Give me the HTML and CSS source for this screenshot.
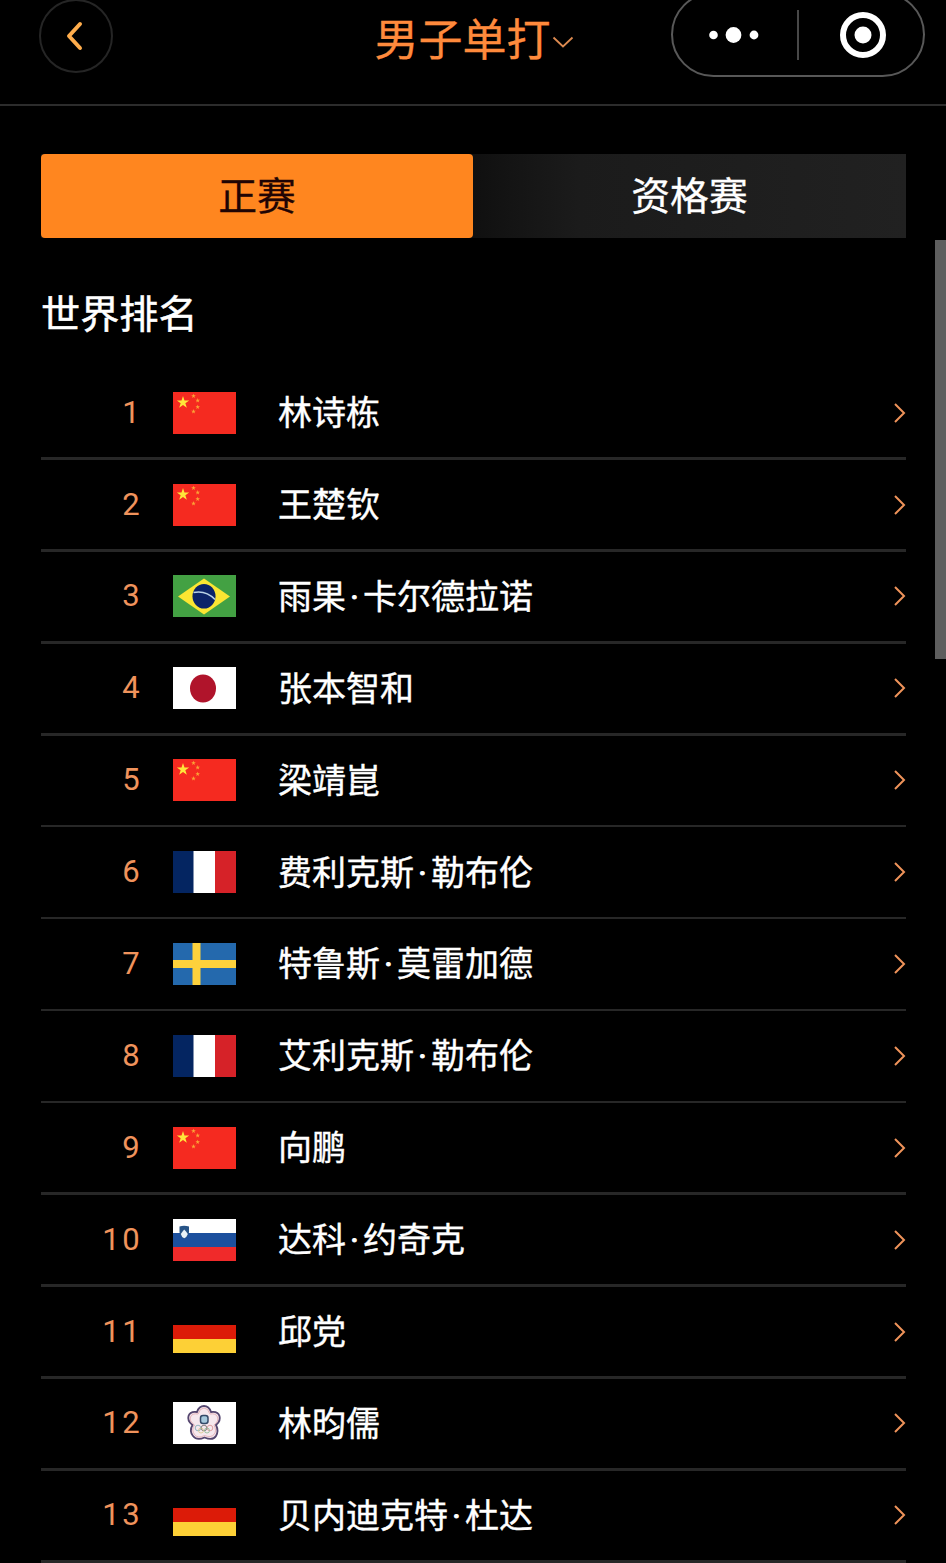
FILE: index.html
```html
<!DOCTYPE html>
<html lang="zh-CN">
<head>
<meta charset="utf-8">
<title>男子单打</title>
<link rel="stylesheet" href="styles.css">
</head>
<body>
<svg class="defs" width="0" height="0" aria-hidden="true">
  <defs>
    <symbol id="star" viewBox="-10 -10 20 20"><path d="M0-10 2.3-3.1H9.5L3.6 1.2 5.9 8.1 0 3.8-5.9 8.1-3.6 1.2-9.5-3.1H-2.3Z"/></symbol>
    <symbol id="cn" viewBox="0 0 63 42">
      <rect width="63" height="42" fill="#f52a20"/>
      <use href="#star" x="3.5" y="4" width="13" height="13" fill="#ffe63a"/>
      <g fill="#fba436">
        <use href="#star" x="18" y="1.500" width="5" height="5"/>
        <use href="#star" x="22.200" y="6" width="5" height="5"/>
        <use href="#star" x="22.200" y="12.500" width="5" height="5"/>
        <use href="#star" x="18" y="17" width="5" height="5"/>
      </g>
    </symbol>
    <symbol id="br" viewBox="0 0 63 42">
      <rect width="63" height="42" fill="#43a143"/>
      <path d="M5 21.5 31 3.5 57 21.5 31 39.500Z" fill="#fbe632"/>
      <ellipse cx="31" cy="21.300" rx="11.500" ry="12.300" fill="#0b2468"/>
      <path d="M20.500 17.500Q33 15 42 24.500" fill="none" stroke="#b9d3e6" stroke-width="1.700"/>
    </symbol>
    <symbol id="jp" viewBox="0 0 63 42">
      <rect width="63" height="42" fill="#fff"/>
      <ellipse cx="30" cy="21.500" rx="13" ry="14" fill="#b0142b"/>
    </symbol>
    <symbol id="fr" viewBox="0 0 63 42">
      <rect width="63" height="42" fill="#fff"/>
      <rect width="20.500" height="42" fill="#042561"/>
      <rect x="42" width="21" height="42" fill="#d62228"/>
    </symbol>
    <symbol id="se" viewBox="0 0 63 42">
      <rect width="63" height="42" fill="#2469ad"/>
      <path d="M19.500 0h8v17H63v8H27.500v17h-8V25H0v-8h19.500Z" fill="#fdd13c"/>
    </symbol>
    <symbol id="si" viewBox="0 0 63 42">
      <rect width="63" height="42" fill="#fff"/>
      <rect y="14" width="63" height="14" fill="#1c509e"/>
      <rect y="28" width="63" height="14" fill="#f02a2a"/>
      <path d="M6.500 7.500Q11 6 16 7.500V13Q15.500 18 11.200 20 7 18 6.500 13Z" fill="#285487"/>
      <path d="M7.800 15 9.600 12.500 11.200 10.500 13 12.500 14.800 15Q14 18 11.200 19.300 8.500 18 7.800 15Z" fill="#e9f2f8"/>
    </symbol>
    <symbol id="de" viewBox="0 0 63 42">
      <rect width="63" height="42" fill="#000"/>
      <rect y="14" width="63" height="14" fill="#dc1b08"/>
      <rect y="28" width="63" height="14" fill="#fdd036"/>
    </symbol>
    <symbol id="tpe" viewBox="0 0 63 42">
      <rect width="63" height="42" fill="#fff"/>
      <path d="M24 10Q26 4 31 4T38 10Q45 9 46.500 14T43 23Q46 29 43 34T31.500 35.500Q24 39 20 34T19.500 23Q14 19 15.500 14T24 10Z" fill="#f6e8ee" stroke="#55466f" stroke-width="1.800"/>
      <path d="M25 12Q27 6 31 6T37 12Q43 11 44.500 15T41 23Q44 29 41 32.500T31.500 33.500Q25 37 21.500 32.500T21.500 23Q16 19 17.500 15T25 12Z" fill="none" stroke="#dc9da5" stroke-width=".7"/>
      <rect x="27.500" y="13.500" width="7.500" height="8" rx="2.500" fill="#a6c9dc" stroke="#344a68" stroke-width="1.500"/>
      <g fill="none" stroke-width=".8">
        <circle cx="25" cy="26" r="2.800" stroke="#7ba8b4"/>
        <circle cx="31" cy="26" r="2.800" stroke="#666"/>
        <circle cx="37" cy="26" r="2.800" stroke="#d69090"/>
        <circle cx="28" cy="28.500" r="2.500" stroke="#d9c68a"/>
        <circle cx="34" cy="28.500" r="2.500" stroke="#8dbb94"/>
      </g>
    </symbol>
    <symbol id="go" viewBox="0 0 13 20"><path d="M2 1 11 10 2 19" fill="none" stroke="#ef935a" stroke-width="2"/></symbol>
  </defs>
</svg>

<header class="header">
  <button class="back" aria-label="返回">
    <svg width="18" height="30" viewBox="0 0 18 30"><path d="M15 3 4 15 15 27" fill="none" stroke="#ffad4c" stroke-width="4" stroke-linecap="round" stroke-linejoin="round"/></svg>
  </button>
  <h1 class="title">男子单打<svg class="caret" width="22" height="13" viewBox="0 0 22 13"><path d="M1.500 1.500 11 10.500 20.500 1.500" fill="none" stroke="#dd8a50" stroke-width="1.800"/></svg></h1>
  <div class="capsule">
    <svg width="50" height="16" viewBox="0 0 50 16" fill="#fff"><circle cx="4.500" cy="8" r="4.300"/><circle cx="24.500" cy="8" r="7.900"/><circle cx="45" cy="8" r="4.400"/></svg>
    <span class="capsule-line"></span>
    <svg width="46" height="46" viewBox="0 0 46 46"><circle cx="23" cy="23" r="20" fill="none" stroke="#fff" stroke-width="6"/><circle cx="23" cy="23" r="8.500" fill="#fff"/></svg>
  </div>
</header>

<main class="content">
  <nav class="tabs">
    <button class="tab tab-active">正赛</button>
    <button class="tab">资格赛</button>
  </nav>
  <h2 class="heading">世界排名</h2>
  <ol class="list">
    <li class="row"><span class="rank">1</span><svg class="flag"><use href="#cn"/></svg><span class="name">林诗栋</span><svg class="go"><use href="#go"/></svg></li>
    <li class="row"><span class="rank">2</span><svg class="flag"><use href="#cn"/></svg><span class="name">王楚钦</span><svg class="go"><use href="#go"/></svg></li>
    <li class="row"><span class="rank">3</span><svg class="flag"><use href="#br"/></svg><span class="name">雨果<i class="dot">·</i>卡尔德拉诺</span><svg class="go"><use href="#go"/></svg></li>
    <li class="row"><span class="rank">4</span><svg class="flag"><use href="#jp"/></svg><span class="name">张本智和</span><svg class="go"><use href="#go"/></svg></li>
    <li class="row"><span class="rank">5</span><svg class="flag"><use href="#cn"/></svg><span class="name">梁靖崑</span><svg class="go"><use href="#go"/></svg></li>
    <li class="row"><span class="rank">6</span><svg class="flag"><use href="#fr"/></svg><span class="name">费利克斯<i class="dot">·</i>勒布伦</span><svg class="go"><use href="#go"/></svg></li>
    <li class="row"><span class="rank">7</span><svg class="flag"><use href="#se"/></svg><span class="name">特鲁斯<i class="dot">·</i>莫雷加德</span><svg class="go"><use href="#go"/></svg></li>
    <li class="row"><span class="rank">8</span><svg class="flag"><use href="#fr"/></svg><span class="name">艾利克斯<i class="dot">·</i>勒布伦</span><svg class="go"><use href="#go"/></svg></li>
    <li class="row"><span class="rank">9</span><svg class="flag"><use href="#cn"/></svg><span class="name">向鹏</span><svg class="go"><use href="#go"/></svg></li>
    <li class="row"><span class="rank">10</span><svg class="flag"><use href="#si"/></svg><span class="name">达科<i class="dot">·</i>约奇克</span><svg class="go"><use href="#go"/></svg></li>
    <li class="row"><span class="rank">11</span><svg class="flag"><use href="#de"/></svg><span class="name">邱党</span><svg class="go"><use href="#go"/></svg></li>
    <li class="row"><span class="rank">12</span><svg class="flag"><use href="#tpe"/></svg><span class="name">林昀儒</span><svg class="go"><use href="#go"/></svg></li>
    <li class="row"><span class="rank">13</span><svg class="flag"><use href="#de"/></svg><span class="name">贝内迪克特<i class="dot">·</i>杜达</span><svg class="go"><use href="#go"/></svg></li>
  </ol>
</main>
<div class="scrollbar"></div>
</body>
</html>
```

FILE: styles.css
```css
* {
  box-sizing: border-box;
}

body {
  position: relative;
  margin: 0;
  height: 1563px;
  overflow: hidden;
  background: #000;
  color: #fff;
  font-family: "Noto Sans CJK SC", sans-serif;
}

.defs {
  display: block;
}

button {
  padding: 0;
  border: 0;
  font: inherit;
}

.header {
  display: grid;
  grid-template-columns: 1fr auto 1fr;
  align-items: start;
  height: 106px;
  padding: 0 21px 0 39px;
  border-bottom: 2px solid #2c2c2c;
}

.back {
  display: flex;
  align-items: center;
  justify-content: center;
  width: 74px;
  height: 74px;
  margin-top: -1px;
  padding-right: 5px;
  border: 2px solid #252525;
  border-radius: 50%;
  background: transparent;
}

.title {
  display: flex;
  align-items: center;
  margin: 5px 0 0 -16px;
  color: #ff8a3c;
  font-size: 44px;
  font-weight: 400;
  line-height: 64px;
  -webkit-text-stroke: 0.300px;
}

.caret {
  margin: 10px 0 0 1px;
}

.capsule {
  display: flex;
  align-items: center;
  justify-self: end;
  width: 254px;
  height: 85px;
  margin-top: -8px;
  padding: 0 36px 0 36px;
  border: 2px solid #585858;
  border-radius: 43px;
}

.capsule-line {
  width: 2px;
  height: 50px;
  margin: 0 41px 0 38px;
  background: #484848;
}

.capsule svg {
  flex: none;
}

.content {
  padding: 48px 40px 0 41px;
}

.tabs {
  display: grid;
  grid-template-columns: 432px 1fr;
  height: 84px;
  background: linear-gradient(90deg, #101010 50%, #1b1b1b 62%, #212121);
}

.tab {
  padding-bottom: 7px;
  background: transparent;
  color: #fff;
  font-size: 38.800px;
  line-height: 56px;
  -webkit-text-stroke: 0.300px;
}

.tab-active {
  border-radius: 4px;
  background: #ff861f;
  color: #200404;
}

.heading {
  margin: 44px 0 0;
  font-size: 39.200px;
  font-weight: 400;
  line-height: 58px;
  -webkit-text-stroke: 0.500px;
}

.list {
  margin: 28px 0 0;
  padding: 0;
  list-style: none;
}

.row {
  display: grid;
  grid-template-columns: 101px 63px 1fr 13px;
  grid-template-rows: 89.300px 2.600px;
  align-items: center;
}

.row::after {
  content: "";
  grid-column: 1 / -1;
  align-self: stretch;
  background: #272727;
}

.rank {
  color: #f0935c;
  font-family: Roboto, sans-serif;
  font-size: 31px;
  letter-spacing: 2.400px;
  line-height: 40px;
  text-align: right;
}

.flag {
  width: 63px;
  height: 42px;
  margin-left: 31px;
}

.name {
  padding: 0 0 3px 73px;
  font-size: 34px;
  line-height: 50px;
  white-space: nowrap;
  -webkit-text-stroke: 0.400px;
}

.dot {
  display: inline-block;
  width: 17px;
  font-family: Roboto, sans-serif;
  font-style: normal;
  line-height: 1;
  text-align: center;
  -webkit-text-stroke: 1px;
}

.go {
  width: 13px;
  height: 20px;
}

.scrollbar {
  position: absolute;
  top: 240px;
  right: 0;
  width: 11px;
  height: 419px;
  background: #5e5e5e;
}
```
